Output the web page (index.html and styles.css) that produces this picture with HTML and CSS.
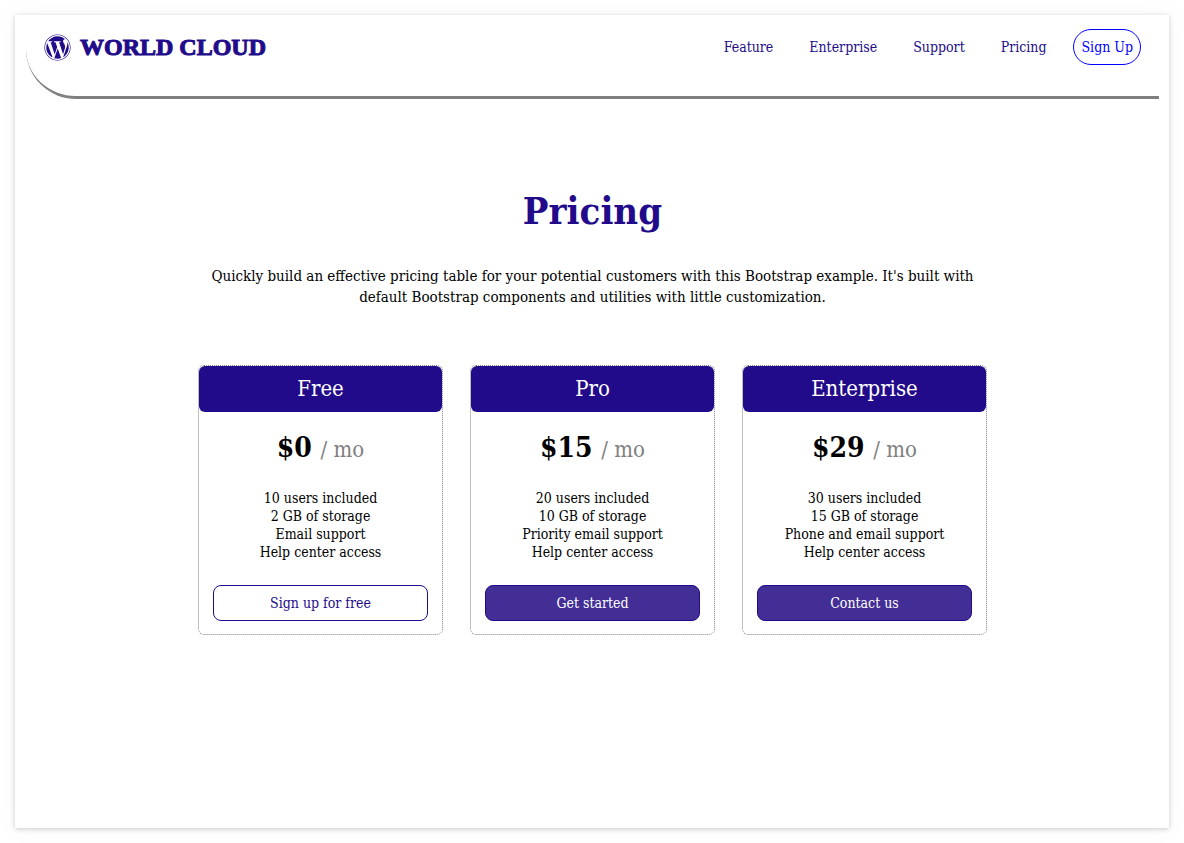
FILE: index.html
```html
<!DOCTYPE html>
<html lang="en">
<head>
  <meta charset="UTF-8" />
  <meta name="viewport" content="width=device-width, initial-scale=1.0"/>
  <title>World Cloud - Pricing</title>
  <link rel="stylesheet" href="styles.css">
</head>
<body>
  <div class="container">
    <header>
      <a class="logo" href="#">
        <svg class="logo-icon" viewBox="0 0 512 512" aria-hidden="true"><path d="M61.7 169.4l101.5 278C92.2 413 43.3 340.2 43.3 256c0-30.9 6.6-60.1 18.4-86.6zm337.9 75.9c0-26.3-9.4-44.5-17.5-58.7-10.8-17.5-20.9-32.4-20.9-49.9 0-19.6 14.8-37.8 35.7-37.8.9 0 1.8.1 2.8.2-37.9-34.7-88.3-55.9-143.7-55.9-74.3 0-139.7 38.1-177.8 95.9 5 .2 9.7.3 13.7.3 22.2 0 56.7-2.7 56.7-2.7 11.5-.7 12.8 16.2 1.4 17.5 0 0-11.5 1.3-24.3 2l77.5 230.4L249.8 247l-33.1-90.8c-11.5-.7-22.3-2-22.3-2-11.5-.7-10.1-18.2 1.3-17.5 0 0 35.1 2.7 56 2.7 22.2 0 56.7-2.7 56.7-2.7 11.5-.7 12.8 16.2 1.4 17.5 0 0-11.5 1.3-24.3 2l76.9 228.7 21.2-70.9c9-29.4 16-50.5 16-68.7zm-139.9 29.3l-63.8 185.5c19.1 5.6 39.2 8.7 60.1 8.7 24.8 0 48.5-4.3 70.6-12.1-.6-.9-1.1-1.9-1.5-2.9l-65.4-179.2zm183-120.7c.9 6.8 1.4 14 1.4 21.9 0 21.6-4 45.8-16.2 76.2l-65 187.9C426.2 403 468.7 334.5 468.7 256c0-37-9.4-71.8-26-102.1zM504 256c0 136.8-111.3 248-248 248C119.2 504 8 392.7 8 256 8 119.2 119.2 8 256 8c136.7 0 248 111.2 248 248zm-11.4 0c0-130.5-106.2-236.6-236.6-236.6C125.5 19.4 19.4 125.5 19.4 256S125.6 492.6 256 492.6c130.5 0 236.6-106.1 236.6-236.6z"/></svg>
        <span>WORLD CLOUD</span>
      </a>
      <nav>
        <a href="#">Feature</a>
        <a href="#">Enterprise</a>
        <a href="#">Support</a>
        <a href="#">Pricing</a>
        <button class="sign-up" type="button">Sign Up</button>
      </nav>
    </header>
    <main>
      <h1>Pricing</h1>
      <p class="intro">Quickly build an effective pricing table for your potential customers with this Bootstrap example. It's built with default Bootstrap components and utilities with little customization.</p>
      <div class="cards">
        <div class="card">
          <h2>Free</h2>
          <p class="price">$0 <span>/ mo</span></p>
          <ul>
            <li>10 users included</li>
            <li>2 GB of storage</li>
            <li>Email support</li>
            <li>Help center access</li>
          </ul>
          <button class="btn btn-outline" type="button">Sign up for free</button>
        </div>
        <div class="card">
          <h2>Pro</h2>
          <p class="price">$15 <span>/ mo</span></p>
          <ul>
            <li>20 users included</li>
            <li>10 GB of storage</li>
            <li>Priority email support</li>
            <li>Help center access</li>
          </ul>
          <button class="btn" type="button">Get started</button>
        </div>
        <div class="card">
          <h2>Enterprise</h2>
          <p class="price">$29 <span>/ mo</span></p>
          <ul>
            <li>30 users included</li>
            <li>15 GB of storage</li>
            <li>Phone and email support</li>
            <li>Help center access</li>
          </ul>
          <button class="btn" type="button">Contact us</button>
        </div>
      </div>
    </main>
  </div>
</body>
</html>
```
FILE: styles.css
```css
:root {
  --primary: #220b8a;
  --primary-soft: #432e96;
}
* { box-sizing: border-box; margin: 0; padding: 0; }
body {
  font-family: "DejaVu Serif Condensed", "DejaVu Serif", serif;
  font-size: 14px;
  line-height: 18px;
  color: black;
  background-color: white;
  padding: 15px;
}
button { font: inherit; cursor: pointer; }
.container {
  min-height: calc(100vh - 30px);
  padding: 10px 10px 10px 11px;
  box-shadow: 0 1px 5px rgba(0, 0, 0, 0.2), 0 0 30px rgba(0, 0, 0, 0.03);
}
header {
  display: flex;
  justify-content: space-between;
  align-items: center;
  padding: 4px 18px 31px;
  border-bottom: 3px solid gray;
  border-bottom-left-radius: 50px;
}
.logo {
  display: flex;
  align-items: center;
  gap: 9px;
  font-family: "Liberation Serif", serif;
  font-size: 24px;
  font-weight: bold;
  color: var(--primary);
  text-decoration: none;
}
.logo span { -webkit-text-stroke: 1px var(--primary); }
.logo-icon { width: 27px; height: 27px; fill: var(--primary); }
nav { display: flex; align-items: center; gap: 18px; }
nav a {
  padding: 0 9px;
  color: var(--primary);
  text-decoration: none;
}
.sign-up {
  height: 36px;
  padding: 0 7px;
  color: blue;
  background: none;
  border: 1px solid blue;
  border-radius: 18px;
}
main {
  max-width: 789px;
  margin: 0 auto;
  padding-top: 85px;
  text-align: center;
}
h1 {
  font-size: 38px;
  line-height: 54px;
  margin-bottom: 28px;
  color: var(--primary);
}
.intro {
  font-size: 15px;
  line-height: 21px;
  margin-bottom: 57px;
}
.cards { display: flex; gap: 27px; }
.card {
  flex: 1;
  border: 1px dotted gray;
  border-radius: 6px;
}
.card h2 {
  font-size: 22px;
  font-weight: normal;
  line-height: 46px;
  color: white;
  background-color: var(--primary);
  border-radius: 6px;
}
.price {
  margin: 18px 0 23px;
  font-size: 28px;
  font-weight: bold;
  line-height: 36px;
}
.price span {
  font-size: 22px;
  font-weight: normal;
  line-height: 22px;
  color: gray;
}
.card ul { list-style: none; margin-bottom: 24px; }
.btn {
  width: calc(100% - 28px);
  height: 36px;
  margin-bottom: 13px;
  color: white;
  background-color: var(--primary-soft);
  border: 1px solid var(--primary);
  border-radius: 8px;
}
.btn-outline { color: var(--primary); background-color: white; }
@media (max-width: 768px) {
  header { flex-wrap: wrap; gap: 18px; }
  nav { flex-wrap: wrap; }
  .cards { flex-direction: column; }
}
```
